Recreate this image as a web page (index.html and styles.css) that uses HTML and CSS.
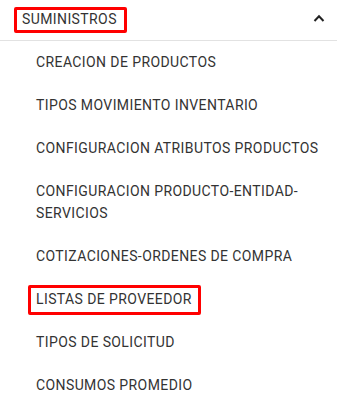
FILE: index.html
```html
<!DOCTYPE html>
<html lang="es">
<head>
<meta charset="utf-8">
<title>Suministros</title>
<link rel="stylesheet" href="styles.css">
</head>
<body>
<div class="panel">
  <div class="panel-header">
    <span class="mark mark-title">SUMINISTROS</span>
    <svg class="chevron" width="12" height="10" viewBox="0 0 12 10" aria-hidden="true">
      <polyline points="1.5,7 6,2.3 10.5,7" fill="none" stroke="#222" stroke-width="2"/>
    </svg>
  </div>
  <ul class="menu">
    <li class="menu-item">CREACION DE PRODUCTOS</li>
    <li class="menu-item">TIPOS MOVIMIENTO INVENTARIO</li>
    <li class="menu-item">CONFIGURACION ATRIBUTOS PRODUCTOS</li>
    <li class="menu-item">CONFIGURACION PRODUCTO-ENTIDAD-SERVICIOS</li>
    <li class="menu-item">COTIZACIONES-ORDENES DE COMPRA</li>
    <li class="menu-item"><span class="mark mark-item">LISTAS DE PROVEEDOR</span></li>
    <li class="menu-item">TIPOS DE SOLICITUD</li>
    <li class="menu-item">CONSUMOS PROMEDIO</li>
  </ul>
</div>
</body>
</html>
```

FILE: styles.css
```css
html, body {
  margin: 0;
  padding: 0;
  background: #ffffff;
}

body {
  font-family: Roboto, "Liberation Sans", Arial, sans-serif;
  font-size: 14px;
  letter-spacing: 0.4px;
  color: #333333;
}

.panel {
  width: 337px;
}

.panel-header {
  display: flex;
  align-items: flex-start;
  box-sizing: border-box;
  height: 41px;
  padding: 7px 0 0 22px;
  border-bottom: 1px solid #e2e2e2;
}

.mark {
  display: inline-block;
  border: 3px solid #ff0000;
  border-radius: 2px;
  margin-left: -8px;
}

.mark-title {
  line-height: 18px;
  padding: 0 7px 2px 5px;
}

.chevron {
  margin-left: auto;
  margin-right: 12px;
  margin-top: 7px;
}

.menu {
  list-style: none;
  margin: 0;
  padding: 0;
}

.menu-item {
  padding: 10px 16px 11px 36px;
  line-height: 22px;
}

.mark-item {
  line-height: 22px;
  padding: 0 6px 2px 5px;
  margin-top: -4px;
  margin-bottom: -5px;
}
```
